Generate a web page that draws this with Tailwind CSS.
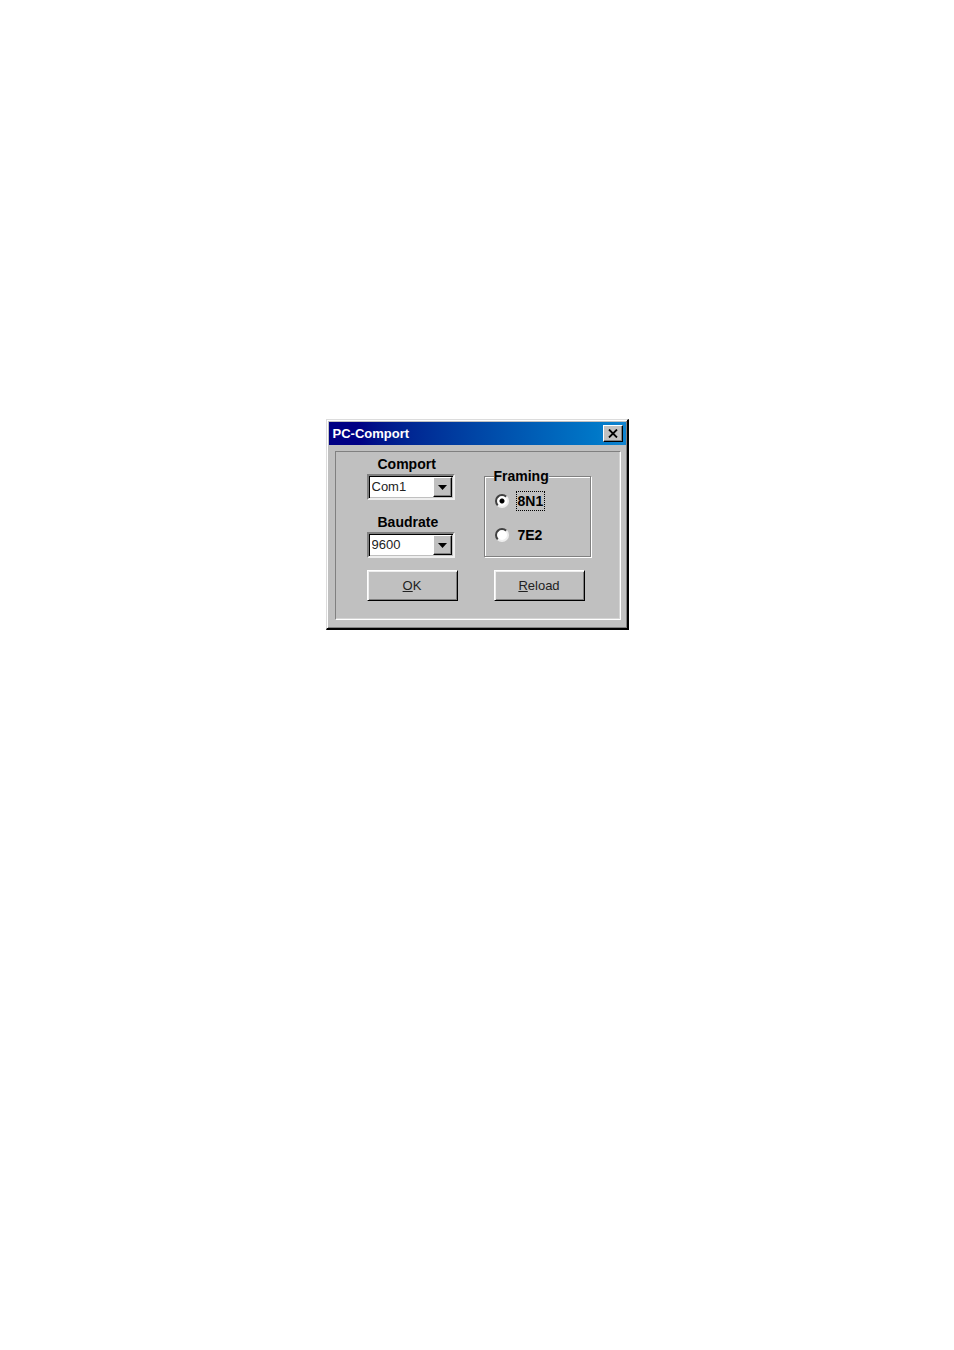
<!DOCTYPE html>
<html lang="en">
<head>
    <meta charset="UTF-8">
    <meta name="viewport" content="width=device-width, initial-scale=1.0">
    <title>PC-Comport</title>
    <script src="https://cdn.jsdelivr.net/npm/@tailwindcss/browser@4"></script>
</head>
<body class="bg-white text-black font-['Liberation_Sans',Arial,sans-serif]">
    <main class="min-h-screen flex justify-center items-start pt-[419px]">
        <!-- Dialog window -->
        <div class="w-full max-w-[303px] bg-[#c0c0c0] border-t border-l border-r-2 border-b-2 border-t-[#dcdcdc] border-l-[#dcdcdc] border-r-black border-b-black shadow-[inset_1px_1px_0_#fff,inset_-1px_-1px_0_#808080] pt-[2px] pl-[2px] pr-px pb-2">
            <!-- Title bar -->
            <header class="flex items-center justify-between h-[23px] pl-1 pr-[3px] bg-linear-to-r from-[#000084] from-10% to-[#1084d0]">
                <h1 class="text-[13px] leading-4 font-bold text-white">PC-Comport</h1>
                <button type="button" aria-label="Close" class="w-5 h-[17px] flex items-center justify-center bg-[#c0c0c0] border border-t-white border-l-white border-r-black border-b-black shadow-[inset_-1px_-1px_0_#808080]">
                    <svg class="w-[10px] h-[9px]" viewBox="0 0 10 9" fill="none" stroke="#000" stroke-width="1.8">
                        <path d="M1 0.5L9 8.5M9 0.5L1 8.5"/>
                    </svg>
                </button>
            </header>

            <!-- Settings form -->
            <form class="mt-[6px] ml-[6px] mr-[5px] pt-1 pb-[18px] pl-[31px] pr-[29px] border border-t-[#808080] border-l-[#808080] border-r-white border-b-white shadow-[inset_-1px_-1px_0_#d4d4d4]">
                <div class="flex justify-between">
                    <div class="w-[88px]">
                        <label for="comport" class="block pl-[11px] text-[14px] leading-4 font-bold">Comport</label>
                        <div class="relative mt-[2px]">
                            <select id="comport" class="block w-full h-[26px] appearance-none bg-white pl-[3px] pr-5 text-[13px] leading-4 text-[#222] border-2 border-t-[#808080] border-l-[#808080] border-r-[#eee] border-b-[#eee] shadow-[inset_1px_1px_0_#000,inset_-1px_-1px_0_#c0c0c0]">
                                <option>Com1</option>
                                <option>Com2</option>
                            </select>
                            <span class="absolute top-[3px] right-[3px] bottom-[3px] w-[19px] flex items-center justify-center bg-[#c0c0c0] border border-t-white border-l-white border-r-black border-b-black shadow-[inset_-1px_-1px_0_#808080] pointer-events-none">
                                <svg class="w-[9px] h-[5px]" viewBox="0 0 9 5"><path d="M0 0h9L4.5 5z"/></svg>
                            </span>
                        </div>
                        <label for="baudrate" class="block mt-[14px] pl-[11px] text-[14px] leading-4 font-bold">Baudrate</label>
                        <div class="relative mt-[2px]">
                            <select id="baudrate" class="block w-full h-[26px] appearance-none bg-white pl-[3px] pr-5 text-[13px] leading-4 text-[#222] border-2 border-t-[#808080] border-l-[#808080] border-r-[#eee] border-b-[#eee] shadow-[inset_1px_1px_0_#000,inset_-1px_-1px_0_#c0c0c0]">
                                <option>9600</option>
                                <option>19200</option>
                            </select>
                            <span class="absolute top-[3px] right-[3px] bottom-[3px] w-[19px] flex items-center justify-center bg-[#c0c0c0] border border-t-white border-l-white border-r-black border-b-black shadow-[inset_-1px_-1px_0_#808080] pointer-events-none">
                                <svg class="w-[9px] h-[5px]" viewBox="0 0 9 5"><path d="M0 0h9L4.5 5z"/></svg>
                            </span>
                        </div>
                    </div>

                    <!-- Framing group -->
                    <fieldset class="mt-3 w-[107px] h-[89px] pl-[10px] border border-[#808080] shadow-[1px_1px_0_#fff,inset_1px_1px_0_#fff]">
                        <legend class="-ml-px bg-[#c0c0c0] text-[14px] leading-4 font-bold">Framing</legend>
                        <label class="flex items-center gap-[7px] mt-[7px] text-[14px] leading-4 font-bold">
                            <input type="radio" name="framing" checked class="appearance-none size-[14px] rounded-full bg-white border-2 border-t-[#404040] border-l-[#404040] border-r-[#eee] border-b-[#eee] checked:bg-[radial-gradient(circle,#000_2px,#fff_3px)]">
                            <span class="px-px py-px border border-dotted border-black">8N1</span>
                        </label>
                        <label class="flex items-center gap-[7px] mt-4 text-[14px] leading-4 font-bold">
                            <input type="radio" name="framing" class="appearance-none size-[14px] rounded-full bg-white border-2 border-t-[#404040] border-l-[#404040] border-r-[#eee] border-b-[#eee] checked:bg-[radial-gradient(circle,#000_2px,#fff_3px)]">
                            <span class="px-[2px]">7E2</span>
                        </label>
                    </fieldset>
                </div>

                <div class="flex justify-between mt-3 pr-[6px]">
                    <button type="button" class="w-[91px] h-[31px] text-[13px] leading-4 text-[#222] bg-[#c0c0c0] border border-t-white border-l-white border-r-black border-b-black shadow-[inset_1px_1px_0_#eee,inset_-1px_-1px_0_#808080]"><u>O</u>K</button>
                    <button type="button" class="w-[91px] h-[31px] text-[13px] leading-4 text-[#222] bg-[#c0c0c0] border border-t-white border-l-white border-r-black border-b-black shadow-[inset_1px_1px_0_#eee,inset_-1px_-1px_0_#808080]"><u>R</u>eload</button>
                </div>
            </form>
        </div>
    </main>
</body>
</html>
